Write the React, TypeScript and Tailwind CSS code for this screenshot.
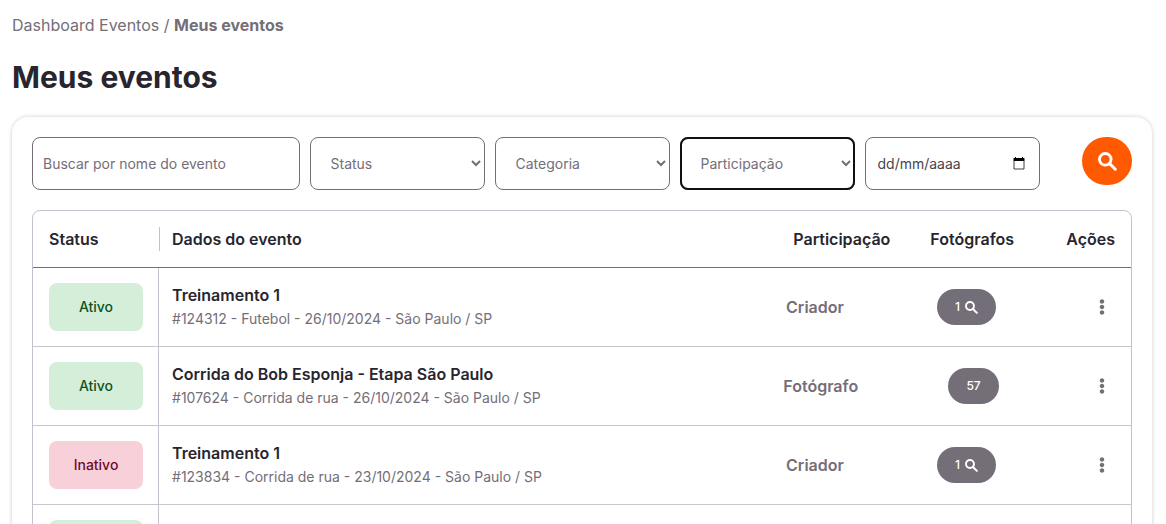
import { useState } from 'react'
import { FaEllipsisV } from 'react-icons/fa'

type Evento = {
  id: number
  ativo: boolean
  nome: string
  descricao: string
  participacao: string
  fotografos: number
}

const eventos: Evento[] = [
  {
    id: 124312,
    ativo: true,
    nome: 'Treinamento 1',
    descricao: 'Futebol - 26/10/2024 - São Paulo / SP',
    participacao: 'Criador',
    fotografos: 1
  },
  {
    id: 107624,
    ativo: true,
    nome: 'Corrida do Bob Esponja - Etapa São Paulo',
    descricao: 'Corrida de rua - 26/10/2024 - São Paulo / SP',
    participacao: 'Fotógrafo',
    fotografos: 57
  },
  {
    id: 123834,
    ativo: false,
    nome: 'Treinamento 1',
    descricao: 'Corrida de rua - 23/10/2024 - São Paulo / SP',
    participacao: 'Criador',
    fotografos: 1
  },
  {
    id: 123833,
    ativo: true,
    nome: 'Treinamento 1',
    descricao: 'Corrida de rua - 23/10/2024 - São Paulo / SP',
    participacao: 'Criador',
    fotografos: 1
  }
]

const filtros = [
  { label: 'Status', opcoes: ['Ativo', 'Inativo'], destaque: false },
  { label: 'Categoria', opcoes: ['Futebol', 'Corrida de rua'], destaque: false },
  { label: 'Participação', opcoes: ['Criador', 'Fotógrafo'], destaque: true }
]

function SearchIcon({ className }: { className: string }) {
  return (
    <svg viewBox="0 0 18 18" className={className} fill="none" stroke="currentColor">
      <circle cx="6.9" cy="6.9" r="5.5" strokeWidth="2.700" />
      <path d="M11 11 16.400 16.400" strokeWidth="2.800" strokeLinecap="round" />
    </svg>
  )
}

function CalendarIcon() {
  return (
    <svg viewBox="0 0 12 13" className="w-3 h-[13px]" fill="currentColor">
      <path d="M2 0h1v1.500H2zM9 0h1v1.500H9zM1 1h10a.5.5 0 0 1 .5.5V4H.5V1.500A.5.5 0 0 1 1 1z" />
      <path d="M1 4v8h10V4" fill="none" stroke="currentColor" strokeOpacity="0.750" />
    </svg>
  )
}

function Filtros() {
  const [nome, setNome] = useState('')
  const [data, setData] = useState('')

  return (
    <form className="grid grid-cols-12 gap-[10px] text-sm" onSubmit={(e) => e.preventDefault()}>
      <input
        type="text"
        aria-label="Buscar por nome do evento"
        placeholder="Buscar por nome do evento"
        value={nome}
        onChange={(e) => setNome(e.target.value)}
        className="col-span-3 min-w-0 h-[53px] px-[10px] border border-[#746e78] rounded-lg placeholder:text-[#746e78]"
      />
      {filtros.map((filtro) => (
        <select
          key={filtro.label}
          aria-label={filtro.label}
          className={`col-span-2 min-w-0 h-[53px] px-4 rounded-lg bg-white text-[#746e78] border border-[#746e78] ${filtro.destaque ? 'outline-2 -outline-offset-2 outline-[#101010]' : ''}`}
        >
          <option value="">{filtro.label}</option>
          {filtro.opcoes.map((opcao) => (
            <option key={opcao}>{opcao}</option>
          ))}
        </select>
      ))}
      <div className="col-span-2 min-w-0 h-[53px] pl-3 pr-[14px] flex items-center border border-[#746e78] rounded-lg">
        <input
          type="text"
          aria-label="Data"
          placeholder="dd/mm/aaaa"
          value={data}
          onChange={(e) => setData(e.target.value)}
          className="flex-1 min-w-0 outline-none placeholder:text-[#48454c]"
        />
        <button type="button" aria-label="Abrir calendário" className="text-black">
          <CalendarIcon />
        </button>
      </div>
      <button
        type="submit"
        aria-label="Buscar"
        className="justify-self-end w-[50px] h-12 flex items-center justify-center rounded-full bg-[#ff5a00] text-white"
      >
        <SearchIcon className="size-[19px]" />
      </button>
    </form>
  )
}

function LinhaEvento({ evento }: { evento: Evento }) {
  return (
    <tr className="flex items-center pr-4 border-b border-[#c8c6cd]">
      <td className="shrink-0 w-[126px] py-[15px] pl-4 pr-[15px] border-r border-[#c4c1cc]">
        <span
          className={`h-12 flex items-center justify-center rounded-lg text-sm font-medium ${evento.ativo ? 'bg-[#d4eeda] text-[#0f5323]' : 'bg-[#f8d0d9] text-[#720b28]'}`}
        >
          {evento.ativo ? 'Ativo' : 'Inativo'}
        </span>
      </td>
      <td className="w-[534px] pl-[13px]">
        <p className="font-semibold">{evento.nome}</p>
        <p className="text-sm leading-6 text-[#746e78]">
          #{evento.id} - {evento.descricao}
        </p>
      </td>
      <td className="ml-auto font-semibold text-[#746e78]">{evento.participacao}</td>
      <td className="ml-auto">
        <button
          type="button"
          className="h-9 px-[18px] flex items-center gap-[5px] rounded-full bg-[#746e78] text-white text-xs font-medium"
        >
          {evento.fotografos}
          {evento.fotografos === 1 && <SearchIcon className="size-[13px]" />}
        </button>
      </td>
      <td className="ml-auto">
        <button type="button" aria-label="Ações" className="w-[26px] flex justify-center text-[#746e78]">
          <FaEllipsisV />
        </button>
      </td>
    </tr>
  )
}

export default function App() {
  return (
    <main className="h-screen overflow-hidden bg-white px-3 pr-[14px] pt-[13px] font-['Inter',sans-serif] text-[#28252e]">
      <nav className="text-[#746e78]">
        <a href="#dashboard">Dashboard Eventos</a> / <strong className="font-bold">Meus eventos</strong>
      </nav>
      <h1 className="mt-[22px] text-[30px] leading-9 font-bold">Meus eventos</h1>

      <section className="mt-[22px] p-5 rounded-2xl shadow-[0_0_4px_rgba(0,0,0,0.2)]">
        <Filtros />

        <div className="mt-5 border border-[#c4c1cc] rounded-lg">
          <table className="block">
            <thead className="block">
              <tr className="flex py-4 pr-4 border-b border-[#746e78] text-left">
                <th className="shrink-0 w-[126px] pl-4 font-semibold">Status</th>
                <th className="grow pl-3 border-l border-[#c4c1cc] font-semibold">Dados do evento</th>
                <th className="font-semibold">Participação</th>
                <th className="ml-10 font-semibold">Fotógrafos</th>
                <th className="ml-10 w-[61px] text-right font-semibold">Ações</th>
              </tr>
            </thead>
            <tbody className="block">
              {eventos.map((evento) => (
                <LinhaEvento key={evento.id} evento={evento} />
              ))}
            </tbody>
          </table>
        </div>
      </section>
    </main>
  )
}
